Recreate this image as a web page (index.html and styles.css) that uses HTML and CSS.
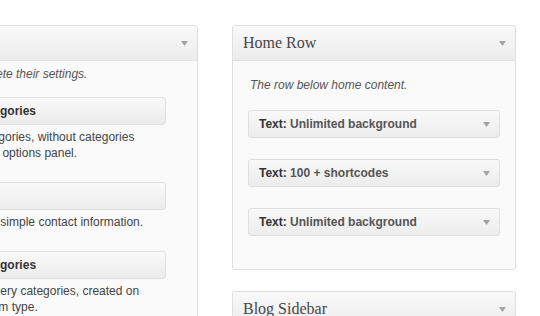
FILE: index.html
```html
<!doctype html>
<html lang="en">
<head>
    <meta charset="UTF-8">
    <title>Widgets</title>
    <link rel="stylesheet" href="styles.css">
</head>
<body>
    <div class="page">
        <div class="col-left">
            <div class="holder">
                <div class="holder-head">
                    <h3>Available Widgets</h3>
                    <span class="toggle"><svg width="7" height="5" viewBox="0 0 7 5"><polygon points="0,0 7,0 3.5,5"/></svg></span>
                </div>
                <div class="holder-body">
                    <p class="note">Drag widgets from here to a sidebar on the right to activate them. Drag widgets back here to deactivate them and delete their settings.</p>
                    <div class="widget-list">
                        <div class="item">
                            <div class="widget"><h4>Project Categories</h4></div>
                            <p class="widget-desc">Displays categories, without categories<br>defined in the options panel.</p>
                        </div>
                        <div class="item">
                            <div class="widget"><h4>Contact</h4></div>
                            <p class="widget-desc">A widget with simple contact information.</p>
                        </div>
                        <div class="item">
                            <div class="widget"><h4>Gallery Categories</h4></div>
                            <p class="widget-desc">Shows all gallery categories, created on<br>the gallery item type.</p>
                        </div>
                    </div>
                </div>
            </div>
        </div>

        <div class="col-right">
            <div class="holder">
                <div class="holder-head">
                    <h3>Home Row</h3>
                    <span class="toggle"><svg width="7" height="5" viewBox="0 0 7 5"><polygon points="0,0 7,0 3.5,5"/></svg></span>
                </div>
                <div class="holder-body sidebar-body">
                    <p class="sidebar-desc">The row below home content.</p>
                    <div class="widget">
                        <h4>Text:<span class="in-title"> Unlimited background</span></h4>
                        <span class="toggle"><svg width="7" height="5" viewBox="0 0 7 5"><polygon points="0,0 7,0 3.5,5"/></svg></span>
                    </div>
                    <div class="widget">
                        <h4>Text:<span class="in-title"> 100 + shortcodes</span></h4>
                        <span class="toggle"><svg width="7" height="5" viewBox="0 0 7 5"><polygon points="0,0 7,0 3.5,5"/></svg></span>
                    </div>
                    <div class="widget">
                        <h4>Text:<span class="in-title"> Unlimited background</span></h4>
                        <span class="toggle"><svg width="7" height="5" viewBox="0 0 7 5"><polygon points="0,0 7,0 3.5,5"/></svg></span>
                    </div>
                </div>
            </div>
            <div class="holder">
                <div class="holder-head">
                    <h3>Blog Sidebar</h3>
                    <span class="toggle"><svg width="7" height="5" viewBox="0 0 7 5"><polygon points="0,0 7,0 3.5,5"/></svg></span>
                </div>
                <div class="holder-body sidebar-body">
                    <p class="sidebar-desc">Widgets shown on the blog pages.</p>
                </div>
            </div>
        </div>
    </div>
</body>
</html>
```

FILE: styles.css
```css
*{
    margin: 0;
    padding: 0;
}
html,body{
    background: #fff;
    overflow: hidden;
}
body{
    font-family: "Liberation Sans", Arial, sans-serif;
    font-size: 12px;
    color: #333;
}
.page{
    display: flex;
    align-items: flex-start;
    gap: 34px;
    padding-top: 25px;
    margin-left: -639px;
}
.col-left{
    width: 837px;
    flex: none;
}
.col-right{
    width: 284px;
    flex: none;
}
.holder{
    background: #fafafa;
    border: 1px solid #dfdfdf;
    border-radius: 3px;
    margin-bottom: 21px;
}
.holder-head{
    height: 34px;
    display: flex;
    align-items: center;
    justify-content: space-between;
    padding: 0 9px 0 10px;
    background: linear-gradient(to bottom, #f9f9f9, #ececec);
    border-bottom: 1px solid #dfdfdf;
    border-radius: 3px 3px 0 0;
}
.holder-head h3{
    font-family: "Liberation Serif", Georgia, serif;
    font-size: 16px;
    font-weight: normal;
    color: #464646;
}
.toggle{
    display: flex;
}
.toggle svg{
    fill: #a3a3a3;
}
.holder-body{
    padding: 5px 15px 20px;
}
.note{
    font-style: italic;
    line-height: 17px;
    color: #555;
    white-space: nowrap;
    margin-bottom: 14px;
}
.widget-list{
    display: flex;
    flex-direction: column;
    align-items: flex-end;
    padding-right: 16px;
}
.item{
    width: 247px;
    margin-bottom: 21px;
}
.widget{
    height: 26px;
    display: flex;
    align-items: center;
    justify-content: space-between;
    padding: 0 9px 0 10px;
    background: linear-gradient(to bottom, #f9f9f9, #ececec);
    border: 1px solid #dfdfdf;
    border-radius: 3px;
}
.widget h4{
    font-size: 12px;
    font-weight: bold;
    color: #333;
}
.in-title{
    color: #555;
}
.widget-desc{
    line-height: 16px;
    margin-top: 4px;
    padding: 0 6px 0 8px;
    color: #444;
}
.sidebar-body{
    padding: 16px 15px 33px;
}
.sidebar-desc{
    font-style: italic;
    line-height: 17px;
    color: #555;
    margin-bottom: 16px;
    padding-left: 2px;
}
.sidebar-body .widget{
    margin-bottom: 21px;
}
.sidebar-body .widget:last-child{
    margin-bottom: 0;
}
```
